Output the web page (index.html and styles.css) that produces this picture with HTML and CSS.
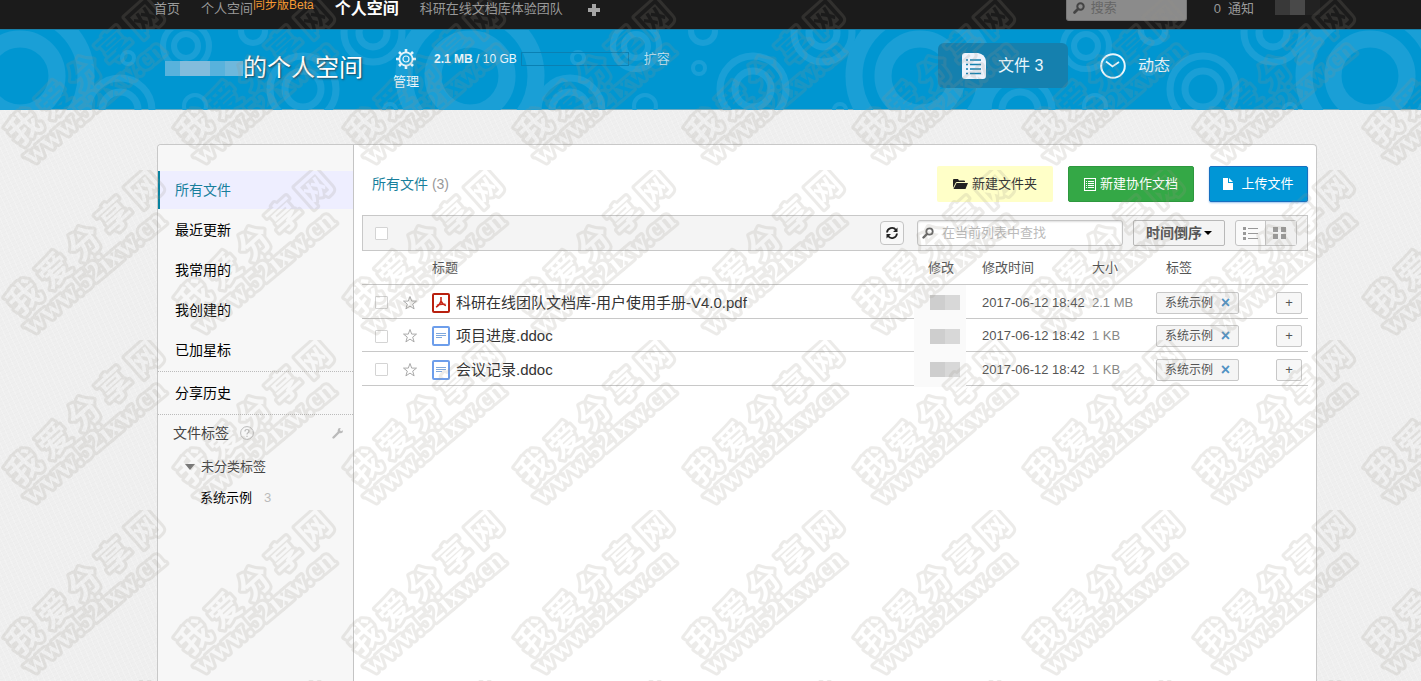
FILE: index.html
```html
<!DOCTYPE html>
<html lang="zh-CN">
<head>
<meta charset="utf-8">
<title>个人空间</title>
<link rel="stylesheet" href="styles.css">
</head>
<body>
<nav class="topbar">
  <a href="#">首页</a>
  <a href="#" class="space-link">个人空间<span class="beta">同步版Beta</span></a>
  <a href="#" class="current">个人空间</a>
  <a href="#">科研在线文档库体验团队</a>
  <button class="add" aria-label="新建团队"><svg width="12" height="12" viewBox="0 0 12 12"><path d="M4 0h4v4h4v4H8v4H4V8H0V4h4z" fill="#a5a5a5"/></svg></button>
  <label class="top-search">
    <svg width="12" height="12" viewBox="0 0 12 12"><circle cx="7.500" cy="4.500" r="3.200" fill="none" stroke="#444" stroke-width="2"/><path d="M5 7L1.500 10.500" stroke="#444" stroke-width="2.600" stroke-linecap="round"/></svg>
    <input type="text" placeholder="搜索" aria-label="搜索">
  </label>
  <a href="#" class="notice"><span>0</span><span>通知</span></a>
  <span class="user-mask"><i></i><i></i><i></i></span>
</nav>

<header class="banner">
  <svg class="rings" width="100%" height="80" aria-hidden="true">
    <defs>
      <pattern id="rings" width="450" height="80" patternUnits="userSpaceOnUse">
        <g fill="none" stroke="#1a9fd6">
          <g stroke-width="17"><circle cx="20" cy="46" r="37"/><circle cx="20" cy="46" r="66"/><circle cx="470" cy="46" r="37"/><circle cx="470" cy="46" r="66"/></g>
          <g stroke-width="7"><circle cx="120" cy="80" r="32"/><circle cx="120" cy="80" r="18"/><circle cx="303" cy="59" r="33"/><circle cx="303" cy="59" r="18"/><circle cx="373" cy="3" r="29"/><circle cx="373" cy="3" r="14"/></g>
          <g stroke-width="6"><circle cx="186" cy="16" r="23"/><circle cx="186" cy="16" r="12"/><circle cx="253" cy="1" r="12"/></g>
          <g stroke-width="4"><circle cx="128" cy="28" r="6"/><circle cx="249" cy="38" r="6"/><circle cx="195" cy="76" r="11"/><circle cx="390" cy="80" r="6"/></g>
        </g>
      </pattern>
    </defs>
    <rect width="100%" height="80" fill="url(#rings)"/>
  </svg>
  <h1><span class="name-mask"><i></i><i></i><i></i><i></i><i></i></span>的个人空间</h1>
  <a href="#" class="manage">
    <svg width="20" height="20" viewBox="0 0 20 20"><g fill="none" stroke="#e4f4fb"><circle cx="10" cy="10" r="6.600" stroke-width="1.800"/><circle cx="10" cy="10" r="3" stroke-width="1.200"/><path stroke-width="2.600" d="M10 0v3M10 17v3M0 10h3M17 10h3M3 3l2.100 2.100M14.900 14.900L17 17M3 17l2.100-2.100M14.900 5.100L17 3"/></g></svg>
    管理
  </a>
  <div class="quota"><span><b>2.1 MB</b> / 10 GB</span><span class="quota-bar"></span><a href="#">扩容</a></div>
  <a href="#" class="tab active">
    <svg width="24" height="26" viewBox="0 0 24 26"><path d="M3 0h13q7 1 8 8v15q0 3-3 3H3q-3 0-3-3V3q0-3 3-3z" fill="#eef3fc"/><g stroke="#1580ae" stroke-width="1.600"><path d="M8 7H19M8 11.500H19M8 16H19M8 20.500H19"/><path d="M4 7h2M4 11.500h2M4 16h2M4 20.500h2"/></g></svg>
    文件 3
  </a>
  <a href="#" class="tab">
    <svg width="26" height="26" viewBox="0 0 26 26"><circle cx="13" cy="13" r="11.800" fill="none" stroke="#e9f6fc" stroke-width="2"/><path d="M6 8.500l6.500 5L19 9" fill="none" stroke="#e9f6fc" stroke-width="1.800"/></svg>
    动态
  </a>
</header>

<main class="panel">
  <aside class="sidebar">
    <ul class="filters">
      <li><a href="#" class="selected">所有文件</a></li>
      <li><a href="#">最近更新</a></li>
      <li><a href="#">我常用的</a></li>
      <li><a href="#">我创建的</a></li>
      <li><a href="#">已加星标</a></li>
    </ul>
    <a href="#" class="history">分享历史</a>
    <div class="tags-head">
      <span>文件标签</span>
      <svg width="14" height="14" viewBox="0 0 14 14"><circle cx="7" cy="7" r="6.400" fill="none" stroke="#bbb"/><path d="M5 5.500q0-2 2-2t2 1.800q0 1-1.200 1.700Q7 7.500 7 8.500M7 9.800v1.200" fill="none" stroke="#bbb" stroke-width="1.200"/></svg>
      <svg class="wrench" width="12" height="12" viewBox="0 0 12 12"><path d="M1.500 10.500L7 5" stroke="#bbb" stroke-width="2.400" stroke-linecap="round"/><path d="M10.800 3.200A2.600 2.600 0 1 1 8.800 1.200L7.800 3 9 4.200z" fill="#bbb"/></svg>
    </div>
    <div class="tag-group"><svg width="10" height="6" viewBox="0 0 10 6"><path d="M0 0h10L5 6z" fill="#777"/></svg>未分类标签</div>
    <div class="tag-item"><a href="#">系统示例</a><span>3</span></div>
  </aside>

  <section class="content">
    <div class="heading">
      <h2><a href="#">所有文件</a> (3)</h2>
      <button class="btn folder"><svg width="15" height="12" viewBox="0 0 15 12"><path d="M0 10V2q0-1 1-1h4l1 1.500h5q1 0 1 1V4H4Q3 4 2.500 5z" fill="#222"/><path d="M3.500 5H15l-2.500 6H.500z" fill="#222"/></svg>新建文件夹</button>
      <button class="btn doc"><svg width="12" height="13" viewBox="0 0 12 13"><rect x=".5" y=".5" width="11" height="12" fill="none" stroke="#fff"/><path d="M2 3.500h1M4 3.500h6M2 5.500h1M4 5.500h6M2 7.500h1M4 7.500h6M2 9.500h1M4 9.500h6" stroke="#fff"/></svg>新建协作文档</button>
      <button class="btn upload"><svg width="10" height="12" viewBox="0 0 10 12"><path d="M0 0h5v5h5v7H0z" fill="#fff"/><path d="M6 0l4 4H6z" fill="#fff"/></svg>上传文件</button>
    </div>

    <div class="toolbar">
      <input type="checkbox" class="check" aria-label="全选">
      <button class="refresh" aria-label="刷新"><svg width="14" height="14" viewBox="0 0 14 14"><g fill="none" stroke="#222" stroke-width="1.800"><path d="M2 6.500A5 5 0 0 1 11 4"/><path d="M12 7.500A5 5 0 0 1 3 10"/></g><path d="M12.500 1.500v4.500H8zM1.500 12.500V8H6z" fill="#222"/></svg></button>
      <label class="find">
        <svg width="12" height="12" viewBox="0 0 12 12"><circle cx="7.500" cy="4.500" r="3.200" fill="none" stroke="#666" stroke-width="1.800"/><path d="M5 7L1.500 10.500" stroke="#666" stroke-width="2.400" stroke-linecap="round"/></svg>
        <input type="text" placeholder="在当前列表中查找" aria-label="在当前列表中查找">
      </label>
      <button class="sort">时间倒序<svg width="8" height="4" viewBox="0 0 8 4"><path d="M0 0h8L4 4z"/></svg></button>
      <div class="views">
        <button aria-label="列表"><svg width="15" height="13" viewBox="0 0 15 13"><path d="M0 0h3v3H0zM0 5h3v3H0zM0 10h3v3H0zM5 1h10v1H5zM5 6h10v1H5zM5 11h10v1H5z" fill="#999"/></svg></button>
        <button class="on" aria-label="网格"><svg width="13" height="12" viewBox="0 0 13 12"><path d="M0 0h5v5H0zM8 0h5v5H8zM0 7h5v5H0zM8 7h5v5H8z" fill="#999"/></svg></button>
      </div>
    </div>

    <table class="files">
      <colgroup><col class="c-check"><col class="c-star"><col><col class="c-by"><col class="c-time"><col class="c-size"><col class="c-tag"><col class="c-add"></colgroup>
      <thead><tr><th></th><th></th><th>标题</th><th>修改</th><th>修改时间</th><th>大小</th><th class="tag-th">标签</th><th></th></tr></thead>
      <tbody>
        <tr>
          <td><input type="checkbox" class="check" aria-label="选择"></td>
          <td><button class="star" aria-label="星标"><svg width="16" height="16" viewBox="0 0 16 16"><path d="M8 1.500l1.700 4.600h4.800l-3.800 3 1.400 4.800L8 11.100l-4.100 2.800 1.400-4.800-3.800-3h4.800z" fill="none" stroke="#aaa"/></svg></button></td>
          <td><a href="#" class="file"><svg width="18" height="20" viewBox="0 0 18 20"><rect x="1" y="1" width="16" height="18" rx="1" fill="#fff" stroke="#b8200f" stroke-width="2"/><path d="M9 4v4Q7 13 4 14M9 8q2 4 5 4.500M5 12.500Q9 10.500 13.500 11.500" fill="none" stroke="#c8281a" stroke-width="1.600"/></svg>科研在线团队文档库-用户使用手册-V4.0.pdf</a></td>
          <td class="by"><span class="blob"><i></i><i></i></span></td>
          <td class="time">2017-06-12 18:42</td><td class="size">2.1 MB</td>
          <td><span class="tag">系统示例<button aria-label="移除">×</button></span></td>
          <td><button class="plus" aria-label="添加标签">+</button></td>
        </tr>
        <tr>
          <td><input type="checkbox" class="check" aria-label="选择"></td>
          <td><button class="star" aria-label="星标"><svg width="16" height="16" viewBox="0 0 16 16"><path d="M8 1.500l1.700 4.600h4.800l-3.800 3 1.400 4.800L8 11.100l-4.100 2.800 1.400-4.800-3.800-3h4.800z" fill="none" stroke="#aaa"/></svg></button></td>
          <td><a href="#" class="file"><svg width="18" height="20" viewBox="0 0 18 20"><rect x="1" y="1" width="16" height="18" rx="1" fill="#fff" stroke="#6d9eeb" stroke-width="2"/><path d="M4 7.500h10M4 9.500h10M4 11.500h6" stroke="#7fa8dc"/></svg>项目进度.ddoc</a></td>
          <td class="by"><span class="blob"><i></i><i></i></span></td>
          <td class="time">2017-06-12 18:42</td><td class="size">1 KB</td>
          <td><span class="tag">系统示例<button aria-label="移除">×</button></span></td>
          <td><button class="plus" aria-label="添加标签">+</button></td>
        </tr>
        <tr>
          <td><input type="checkbox" class="check" aria-label="选择"></td>
          <td><button class="star" aria-label="星标"><svg width="16" height="16" viewBox="0 0 16 16"><path d="M8 1.500l1.700 4.600h4.800l-3.800 3 1.400 4.800L8 11.100l-4.100 2.800 1.400-4.800-3.800-3h4.800z" fill="none" stroke="#aaa"/></svg></button></td>
          <td><a href="#" class="file"><svg width="18" height="20" viewBox="0 0 18 20"><rect x="1" y="1" width="16" height="18" rx="1" fill="#fff" stroke="#6d9eeb" stroke-width="2"/><path d="M4 7.500h10M4 9.500h10M4 11.500h6" stroke="#7fa8dc"/></svg>会议记录.ddoc</a></td>
          <td class="by"><span class="blob"><i></i><i></i></span></td>
          <td class="time">2017-06-12 18:42</td><td class="size">1 KB</td>
          <td><span class="tag">系统示例<button aria-label="移除">×</button></span></td>
          <td><button class="plus" aria-label="添加标签">+</button></td>
        </tr>
      </tbody>
    </table>
  </section>
</main>

<svg class="watermark" width="100%" height="100%" aria-hidden="true">
  <defs>
    <mask id="cut" maskUnits="userSpaceOnUse" x="0" y="0" width="170" height="170">
      <g class="wm-halo"><text class="wm-cn" transform="translate(20 147) rotate(-42)">我&#160;爱&#160;分&#160;享&#160;网</text><text class="wm-url" transform="translate(32 166) rotate(-40)">www.52ixw.cn</text></g>
      <g class="wm-core"><text class="wm-cn" transform="translate(20 147) rotate(-42)">我&#160;爱&#160;分&#160;享&#160;网</text><text class="wm-url" transform="translate(32 166) rotate(-40)">www.52ixw.cn</text></g>
    </mask>
    <pattern id="wm" width="170" height="170" patternUnits="userSpaceOnUse"><rect width="170" height="170" fill="#969188" fill-opacity=".18" mask="url(#cut)"/></pattern>
  </defs>
  <rect width="100%" height="100%" fill="url(#wm)"/>
</svg>
</body>
</html>
```
FILE: styles.css
```css
* { box-sizing: border-box; }
body {
  margin: 0;
  position: relative;
  height: 100vh;
  overflow: hidden;
  display: flex;
  flex-direction: column;
  font: 13px/18px "Liberation Sans", "Noto Sans CJK SC", sans-serif;
  color: #555;
  background-color: #efefef;
  background-image:
    repeating-linear-gradient(65deg, rgba(255,255,255,.2) 0 1px, transparent 1px 5px),
    repeating-linear-gradient(155deg, rgba(0,0,0,.008) 0 1px, transparent 1px 4px);
}
a { color: inherit; text-decoration: none; }
button, input { font: inherit; color: inherit; }
button { border: 0; padding: 0; background: none; }
svg { display: block; flex: none; }
i { display: block; }
h1, h2, ul { margin: 0; padding: 0; font-weight: normal; list-style: none; }

.topbar {
  flex: none;
  height: 29px;
  padding: 0 101px 0 154px;
  display: flex;
  align-items: flex-start;
  gap: 21px;
  background: #1b1b1b;
  color: #999;
  white-space: nowrap;
}
.space-link { display: flex; }
.beta { font-size: 12px; line-height: 10px; color: #f79a32; }
.topbar .current { font-size: 16px; font-weight: bold; color: #fff; }
.add { margin: 4px 0 0 4px; }
.top-search {
  margin-left: auto;
  width: 121px;
  height: 21px;
  padding: 0 6px;
  display: flex;
  align-items: center;
  gap: 6px;
  background: #8b8b8b;
  border: 1px solid #777;
  border-top: 0;
  border-radius: 0 0 3px 3px;
}
.top-search svg { margin-bottom: 5px; }
.top-search input { width: 80px; height: 18px; margin-bottom: 4px; padding: 0; border: 0; background: none; outline: 0; }
.top-search input::placeholder { color: #666; }
.notice { margin-left: 6px; display: flex; gap: 7px; }
.user-mask { display: flex; }
.user-mask i { width: 15px; height: 15px; background: #393939; }
.user-mask i:nth-child(2) { background: #494949; }
.user-mask i:nth-child(3) { background: #222; }

.banner {
  position: relative;
  flex: none;
  height: 81px;
  padding: 0 251px 0 165px;
  display: flex;
  align-items: flex-start;
  background: #0096d1;
  border-bottom: 1px solid #6aa9c0;
  border-top: 1px solid #1780aa;
  color: #e9f6fc;
  white-space: nowrap;
}
.rings { position: absolute; left: 0; top: 0; }
.banner > :not(.rings) { position: relative; }
.banner h1 { display: flex; margin-top: 20px; font-size: 24px; line-height: 36px; color: #fff; text-shadow: 1px 1px 2px #245; }
.name-mask { display: flex; align-items: center; width: 78px; }
.name-mask i { width: 15px; height: 15px; background: #58b2dc; }
.name-mask i:nth-child(2), .name-mask i:nth-child(3) { background: #83bcdc; }
.name-mask i:nth-child(5) { width: 18px; background: #6fb8dc; }
.manage { margin: 19px 0 0 30px; display: flex; flex-direction: column; align-items: center; gap: 4px; }
.quota { margin-top: 20px; margin-left: 15px; display: flex; align-items: center; gap: 4px; font-size: 12px; }
.quota-bar { width: 108px; height: 14px; border: 1px solid #0a80b3; }
.quota a { margin-left: 11px; font-size: 13px; color: #b5dff2; }
.tab { height: 45px; margin-top: 13px; display: flex; align-items: center; gap: 12px; font-size: 16px; }
.tab.active { width: 130px; margin-left: auto; margin-right: 32px; padding-left: 24px; background: #1580ae; border-radius: 6px; }

.panel {
  flex: 1;
  min-height: 0;
  margin: 34px 104px 0 157px;
  display: flex;
  background: #fff;
  border: 1px solid #c8c8c8;
  border-bottom: 0;
  border-radius: 4px 4px 0 0;
}
.sidebar { flex: none; width: 196px; padding-top: 26px; background: #f7f7f7; border-right: 1px solid #c4c4c4; font-size: 14px; color: #000; border-radius: 4px 0 0 0; }
.filters { display: flex; flex-direction: column; gap: 2px; padding-bottom: 2px; border-bottom: 1px dotted #bbb; }
.filters a { display: block; padding-left: 17px; line-height: 38px; }
.filters .selected { padding-left: 15px; border-left: 2px solid #08829f; background: #eeeeff; color: #187f9c; }
.history { display: block; padding-left: 17px; line-height: 42px; border-bottom: 1px dotted #bbb; }
.tags-head { display: flex; align-items: center; gap: 11px; height: 36px; padding: 0 9px 0 15px; color: #444; }
.wrench { margin-left: auto; }
.tag-group { display: flex; align-items: center; gap: 6px; height: 32px; padding-left: 27px; font-size: 13px; color: #444; }
.tag-item { display: flex; align-items: center; gap: 12px; height: 30px; padding-left: 42px; font-size: 13px; }
.tag-item span { color: #bbb; }

.content { flex: 1; min-width: 0; padding: 0 8px; }
.heading { display: flex; align-items: center; gap: 15px; height: 70px; padding: 8px 0 0 10px; }
.heading h2 { flex: 1; font-size: 14px; color: #999; }
.heading h2 a { color: #187f9c; }
.btn { display: flex; align-items: center; justify-content: center; gap: 4px; height: 36px; border-radius: 2px; color: #fff; white-space: nowrap; }
.folder { width: 116px; background: #ffffc8; color: #333; }
.doc { width: 126px; background: #34a846; border: 1px solid #2e983e; }
.upload { width: 99px; gap: 8px; background: #0096d6; border: 1px solid #1670c0; box-shadow: 0 1px 2px #9bc4ee; }

.toolbar { display: flex; align-items: center; height: 36px; padding: 0 10px 0 12px; background: #f4f4f4; border: 1px solid #c8c8c8; }
.check { appearance: none; display: block; width: 13px; height: 13px; margin: 0; border: 1px solid #d4d4d4; border-radius: 1px; background: #fff; }
.refresh { width: 24px; height: 24px; margin: 0 13px 0 auto; display: flex; align-items: center; justify-content: center; background: #f8f8f8; border: 1px solid #c4c4c4; border-radius: 4px; }
.find { width: 206px; height: 26px; padding: 0 4px; display: flex; align-items: center; gap: 8px; background: #fff; border: 1px solid #c4c4c4; border-radius: 3px; box-shadow: inset 0 1px 2px #ddd; }
.find input { flex: 1; min-width: 0; padding: 0; border: 0; outline: 0; background: none; }
.find input::placeholder { color: #bbb; }
.sort { width: 92px; height: 26px; margin: 0 10px; display: flex; align-items: center; justify-content: center; gap: 2px; font-size: 14px; font-weight: bold; color: #555; background: #f4f4f4; border: 1px solid #b8b8b8; border-radius: 2px; }
.views { display: flex; width: 62px; height: 26px; border: 1px solid #c4c4c4; border-radius: 3px; background: #fafafa; }
.views button { width: 29px; display: flex; align-items: center; justify-content: center; }
.views .on { flex: 1; padding-right: 4px; background: #f0f0f0; border-left: 1px solid #c4c4c4; }

.files { width: 100%; table-layout: fixed; border-collapse: separate; border-spacing: 0; }
.c-check { width: 36px; }
.c-star { width: 34px; }
.c-by { width: 54px; }
.c-time { width: 110px; }
.c-size { width: 64px; }
.c-tag { width: 120px; }
.c-add { width: 32px; }
.files th, .files td { height: 34px; padding: 0; text-align: left; font-weight: normal; border-bottom: 1px solid #c8c8c8; white-space: nowrap; }
.files tr:nth-child(2) td { height: 33px; }
.files .tag-th { padding-left: 10px; }
.files td { padding-top: 2px; }
.files td .check { margin-left: 13px; }
.star { display: block; margin-left: 4px; }
.file { display: flex; align-items: center; gap: 6px; font-size: 15px; color: #333; }
.by { position: relative; }
.blob { position: absolute; left: -14px; top: 0; width: 52px; height: 35px; display: flex; align-items: center; padding-left: 16px; background: #fafafa; }
.blob i { width: 15px; height: 15px; background: #cecece; }
.blob i + i { background: #d8d8d8; }
.size { color: #888; }
.tag { display: flex; align-items: center; justify-content: space-between; width: 83px; height: 22px; padding: 0 8px; font-size: 12px; background: #f5f5f5; border: 1px solid #c8c8c8; border-radius: 2px; }
.tag button { font-size: 16px; line-height: 16px; font-weight: bold; color: #5192c4; }
.plus { display: block; width: 26px; height: 22px; line-height: 18px; background: #f7f7f7; border: 1px solid #c8c8c8; border-radius: 2px; }

.watermark { position: absolute; left: 0; top: 0; pointer-events: none; }
.wm-cn { font: bold 33px "Noto Sans CJK SC", sans-serif; }
.wm-url { font: bold 29px "Liberation Serif", serif; }
.wm-halo { fill: #fff; stroke: #fff; stroke-width: 6px; stroke-linejoin: round; }
.wm-core { fill: #000; }
```
